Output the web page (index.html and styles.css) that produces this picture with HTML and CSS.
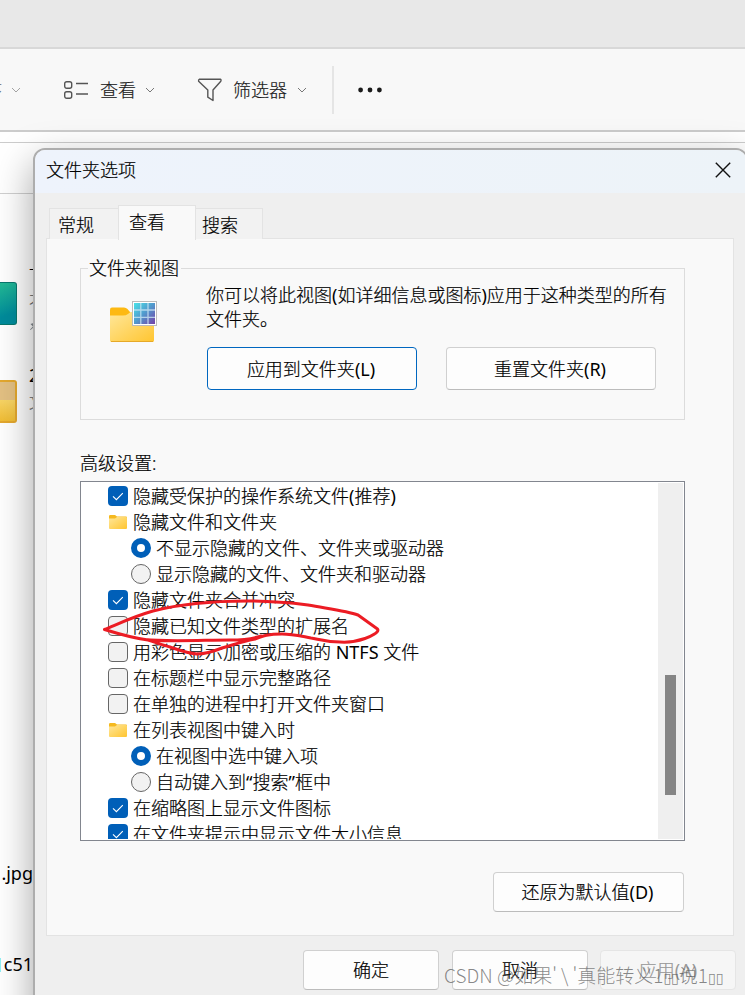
FILE: index.html
```html
<!DOCTYPE html>
<html lang="zh-CN">
<head>
<meta charset="utf-8">
<title>文件夹选项</title>
<link rel="stylesheet" href="styles.css">
</head>
<body>
<svg class="defs" width="0" height="0">
  <defs>
    <linearGradient id="fold" x1="0" y1="0" x2="1" y2="1"><stop offset="0" stop-color="#ffe79a"/><stop offset="1" stop-color="#ffc530"/></linearGradient>
    <linearGradient id="grid" x1="0" y1="0" x2="1" y2="1"><stop offset="0" stop-color="#48e2e8"/><stop offset=".5" stop-color="#5298cc"/><stop offset="1" stop-color="#7440a8"/></linearGradient>
    <symbol id="chev" viewBox="0 0 10 6"><path d="M1 1l4 4 4-4" fill="none" stroke="#777" stroke-width="1"/></symbol>
    <symbol id="folder" viewBox="0 0 18 14"><path d="M0 1.200Q0 0 1.200 0H6l2 1.500h9q1 0 1 1v3H0z" fill="#f5b91f"/><path d="M0 3.500h6l2-1.500h9q1 0 1 1V13q0 1-1 1H1q-1 0-1-1z" fill="url(#fold)"/></symbol>
    <symbol id="tick" viewBox="0 0 20 20"><path d="M5 10.300l3.400 3.400 6.400-6.600" fill="none" stroke="#fff" stroke-width="1.100"/></symbol>
  </defs>
</svg>
<div class="explorer">
  <div class="topbar"></div>
  <div class="toolbar">
    <span class="tool sort"><span class="sort-label">序</span><svg class="chev"><use href="#chev"/></svg></span>
    <span class="tool view">
      <svg width="26" height="20" viewBox="0 0 26 20" fill="none" stroke="#555" stroke-width="1.400"><rect x="1.700" y="1.700" width="7" height="6.600" rx="2"/><rect x="1.700" y="11.700" width="7" height="6.600" rx="2"/><path d="M13 3.500h12M13 14h12"/></svg>
      <span>查看</span><svg class="chev"><use href="#chev"/></svg>
    </span>
    <span class="tool filter">
      <svg width="26" height="24" viewBox="0 0 26 24" fill="none" stroke="#555" stroke-width="1.400" stroke-linejoin="round"><path d="M2.500 1.200h20.800q1.200.6.500 2L16 12v10.500l-5.200-3.300V12L1.600 3.200q-.4-1.400.9-2z"/></svg>
      <span>筛选器</span><svg class="chev"><use href="#chev"/></svg>
    </span>
    <span class="divider"></span>
    <svg class="more" width="24" height="6" viewBox="0 0 24 6"><circle cx="2.600" cy="3" r="2.400"/><circle cx="12" cy="3" r="2.400"/><circle cx="21.400" cy="3" r="2.400"/></svg>
  </div>
  <div class="address"></div>
  <div class="header-gap"></div>
  <div class="files">
    <div class="file first">
      <div class="thumb teal"></div>
      <div class="meta"><span>一</span><span class="sub">不</span><svg class="pin" width="14" height="14" viewBox="0 0 14 14"><path d="M8 1l5 5-2 1-3 3-1 3-2.500-2.500L1.500 13 1 12.500l3-3L1.500 7l3-1 3-3z" fill="#858b90"/></svg></div>
    </div>
    <div class="file second">
      <div class="thumb gold"></div>
      <div class="meta"><span class="lat">2</span><span class="sub">文</span></div>
    </div>
    <div class="name jpg lat">.jpg</div>
    <div class="name hash lat"><i class="mark"></i>c51</div>
  </div>
</div>

<div class="dialog">
  <div class="titlebar"><span>文件夹选项</span><svg width="16" height="16" viewBox="0 0 16 16"><path d="M.8.8l14.400 14.400M15.200.8L.8 15.200" stroke="#111" stroke-width="1.400"/></svg></div>
  <div class="tabs"><div class="tab general">常规</div><div class="tab active">查看</div><div class="tab search">搜索</div></div>
  <div class="panel">
    <div class="group">
      <div class="legend"><span>文件夹视图</span></div>
      <div class="group-body">
        <svg class="bigfolder" width="48" height="42" viewBox="0 0 48 42">
          <path d="M0 8.500Q0 6.500 2 6.500H14q2 0 3.500 1.500L20 11v7H0z" fill="#fdb913"/>
          <path d="M0 14.500h13q3 0 5-1.500l2.500-2H42q2 0 2 2v26.500q0 1.500-2 1.500H2q-2 0-2-1.500z" fill="url(#fold)"/><path d="M1 40.500h42" stroke="#e6a928"/>
          <rect x="22.500" y=".5" width="24" height="24" fill="#fff" stroke="#bbb"/>
          <rect x="24" y="2" width="21" height="21" fill="url(#grid)"/>
          <path d="M30.800 2v21M38 2v21M24 9h21M24 16.300h21" stroke="#c9e5f2" stroke-opacity=".8" stroke-width="1.300"/>
        </svg>
        <div class="group-main">
          <p>你可以将此视图<span class="lat">(</span>如详细信息或图标<span class="lat">)</span>应用于这种类型的所有<br>文件夹。</p>
          <div class="pair"><div class="btn primary">应用到文件夹<span class="lat">(L)</span></div><div class="btn">重置文件夹<span class="lat">(R)</span></div></div>
        </div>
      </div>
    </div>
    <div class="adv">高级设置:</div>
    <div class="listbox">
      <div class="rows">
        <div class="row"><svg class="check on"><use href="#tick"/></svg><span>隐藏受保护的操作系统文件<span class="lat">(</span>推荐<span class="lat">)</span></span></div>
        <div class="row"><svg class="fold"><use href="#folder"/></svg><span>隐藏文件和文件夹</span></div>
        <div class="row child"><i class="radio on"></i><span>不显示隐藏的文件、文件夹或驱动器</span></div>
        <div class="row child"><i class="radio"></i><span>显示隐藏的文件、文件夹和驱动器</span></div>
        <div class="row"><svg class="check on"><use href="#tick"/></svg><span>隐藏文件夹合并冲突</span></div>
        <div class="row"><i class="check"></i><span>隐藏已知文件类型的扩展名</span></div>
        <div class="row"><i class="check"></i><span>用彩色显示加密或压缩的<span class="lat"> NTFS </span>文件</span></div>
        <div class="row"><i class="check"></i><span>在标题栏中显示完整路径</span></div>
        <div class="row"><i class="check"></i><span>在单独的进程中打开文件夹窗口</span></div>
        <div class="row"><svg class="fold"><use href="#folder"/></svg><span>在列表视图中键入时</span></div>
        <div class="row child"><i class="radio on"></i><span>在视图中选中键入项</span></div>
        <div class="row child"><i class="radio"></i><span>自动键入到<span class="lat">“</span>搜索<span class="lat">”</span>框中</span></div>
        <div class="row"><svg class="check on"><use href="#tick"/></svg><span>在缩略图上显示文件图标</span></div>
        <div class="row"><svg class="check on"><use href="#tick"/></svg><span>在文件夹提示中显示文件大小信息</span></div>
      </div>
      <div class="scroll"><div class="thumbbar"></div></div>
    </div>
    <div class="btn restore">还原为默认值<span class="lat">(D)</span></div>
  </div>
  <div class="footer"><div class="btn">确定</div><div class="btn">取消</div><div class="btn disabled">应用<span class="lat">(A)</span></div></div>
</div>

<svg class="ink" width="290" height="64" viewBox="97 595 290 64"><path d="M104.500 629.500C118 624 132 617 153 611C180 604 215 601 248 601C275 601 292 603 308 605C330 609 347 611 358 615L377.500 629C380 632 370 637 365 638.500C355 642 347 642.500 340 642C325 642 318 639 311 638C300 636 292 634 282 634C268 634 263 636 255 639C240 642 233 645 222 648C212 652 205 654 197 654C186 653 179 650 170 647C161 645 155 642 148 640C132 638 119 634 104.500 629.500M145 639.500C165 642 205 640 230 640Q249 640 261 636"/></svg>
<div class="watermark">CSDN @如果'<span class="slash">\</span>'真能转义1<span class="box">▯▯</span>说1<span class="box">▯▯</span></div>
</body>
</html>
```
FILE: styles.css
```css
* { box-sizing: border-box; }
html, body { margin: 0; height: 995px; overflow: hidden; }
body {
  position: relative;
  background: #fff;
  color: #000;
  font: 300 18px/24px "Noto Sans", "Noto Sans CJK SC", sans-serif;
  -webkit-text-stroke: .2px;
  white-space: nowrap;
}
svg { display: block; flex: none; }
.defs { position: absolute; }
.lat { font-weight: 400; -webkit-text-stroke: 0; white-space: pre; }

.explorer { height: 995px; overflow: hidden; }
.topbar { height: 49px; background: #e8e8e8; border-bottom: 2px solid #d8d8d8; }
.toolbar {
  height: 83px;
  display: flex;
  align-items: center;
  padding-top: 1px;
  background: #f8f8f8;
  border-bottom: 2px solid #ccc;
}
.tool { display: flex; align-items: center; color: #1b1b1b; }
.chev { width: 10px; height: 6px; }
.sort { width: 63px; gap: 9px; opacity: .65; }
.sort-label { width: 2px; display: flex; justify-content: flex-end; overflow: hidden; }
.view { width: 134px; gap: 10px; }
.view span { margin-left: 1px; margin-right: -1px; }
.filter { width: 135px; gap: 10px; }
.divider { width: 2px; height: 48px; background: #e5e5e5; }
.more { margin-left: 24px; fill: #1b1b1b; }
.address { height: 11px; border-bottom: 1px solid #ccc; }
.header-gap { height: 51px; border-bottom: 1px solid #d0d0d0; }
.files { padding-top: 64px; }
.file { display: flex; gap: 12px; }
.first { height: 105px; }
.second { height: 498px; }
.thumb { width: 17px; height: 43px; margin-top: 24px; border-radius: 0 3px 3px 0; }
.second .thumb { margin-top: 17px; }
.teal { background: linear-gradient(160deg, #23ba94, #008b9b 75%); border: solid #08776e; border-width: 1px 1px 1px 0; }
.gold { background: linear-gradient(#e3c083 0 45%, #f8d566 46%, #f0bd35); border: 2px solid #e4a82e; border-left: 0; }
.meta { display: flex; flex-direction: column; }
.first .meta { gap: 8px; }
.meta span { height: 24px; }
.first .meta .pin { margin-top: -5px; }
.sub { color: #666; font-size: 16px; }
.second .sub { margin-top: 3px; }
.name { height: 91px; width: 33px; display: flex; justify-content: flex-end; }
.hash { justify-content: space-between; padding-right: 0; }
.mark { width: 1px; height: 14px; margin-top: 6px; background: #8ff0f5; }

.dialog {
  position: absolute;
  left: 33px;
  top: 148px;
  width: 715px;
  height: 880px;
  overflow: hidden;
  background: #efefef;
  background-clip: padding-box;
  border: 2px solid #adadad;
  border-radius: 12px;
  box-shadow: 0 14px 38px rgba(0, 0, 0, .36);
}
.titlebar {
  height: 43px;
  display: flex;
  justify-content: space-between;
  align-items: center;
  padding: 0 15px 3px 11px;
  background: linear-gradient(90deg, #eef3fc, #edf3f8);
}
.tabs { height: 46px; display: flex; align-items: flex-end; padding-left: 14px; }
.tab { height: 31px; padding: 4px 0 0 8px; background: #f2f2f2; border: 1px solid #e3e3e3; border-bottom: 0; }
.general { width: 70px; border-right: 0; }
.active { width: 78px; height: 35px; padding-left: 10px; background: #f9f9f9; z-index: 1; margin-left: -1px; margin-bottom: -1px; }
.search { width: 67px; border-left: 0; padding-left: 6px; }
.panel {
  margin-left: 11px;
  width: 688px;
  height: 698px;
  padding: 18px 0 0 33px;
  margin-top: -1px;
  background: #f9f9f9;
  border: 1px solid #e3e3e3;
}
.group { width: 605px; height: 163px; display: flex; flex-direction: column; }
.legend { height: 23px; display: flex; }
.legend::before, .legend::after { content: ""; height: 12px; margin-top: 11px; border-top: 1px solid #dcdcdc; }
.legend::before { width: 7px; border-left: 1px solid #dcdcdc; }
.legend::after { flex: 1; border-right: 1px solid #dcdcdc; }
.legend span { padding: 0 2px 0 1px; margin-top: -1px; }
.group-body { flex: 1; display: flex; gap: 48px; padding: 3px 0 0 29px; border: 1px solid #dcdcdc; border-top: 0; }
.bigfolder { margin-top: 18px; }
p { margin: 0; line-height: 24px; }
.pair { display: flex; gap: 29px; margin: 16px 0 0 1px; }
.btn {
  width: 210px;
  height: 43px;
  display: flex;
  align-items: center;
  justify-content: center;
  padding-right: 2px;
  background: #fdfdfd;
  border: 1px solid #d0d0d0;
  border-bottom-color: #bcbcbc;
  border-radius: 4px;
}
.primary { border-color: #0067c0; }
.adv { margin-top: 31px; height: 30px; }
.listbox { width: 605px; height: 360px; padding: 1px; display: flex; background: #fff; border: 1px solid #82868f; }
.rows { flex: 1; height: 356px; overflow: hidden; padding-left: 26px; }
.row { height: 26px; display: flex; align-items: center; gap: 5px; }
.child { padding-left: 23px; }
.check, .radio { flex: none; width: 20px; height: 20px; border: 1px solid #666; border-radius: 4px; background: #f2f2f2; }
.check.on { border: 0; background: #005fb8; }
.radio { border-radius: 50%; }
.radio.on { border: 6px solid #005fb8; background: #fff; }
.fold { width: 18px; height: 14px; margin: 0 1px; }
.scroll { width: 25px; background: #efefef; padding: 192px 7px 0; }
.thumbbar { height: 120px; background: #858585; }
.restore { width: 191px; height: 40px; margin: 31px 0 0 413px; }
.footer { display: flex; gap: 13px; padding: 14px 0 0 268px; }
.footer .btn { width: 136px; height: 40px; padding: 0; }
.footer .disabled { color: #999; background: #f6f6f6; border-color: #e5e5e5; margin-left: -1px; }

.ink { position: absolute; left: 97px; top: 595px; fill: none; stroke: #ec1c24; stroke-width: 3; stroke-linecap: round; stroke-linejoin: round; }
.watermark {
  position: absolute;
  left: 444px;
  top: 963px;
  color: rgba(85, 85, 85, .7);
  font: 300 19px/24px "Noto Sans CJK SC", sans-serif;
  -webkit-text-stroke: 0;
}
.slash { margin: 0 4px; }
.box { font: 14px/24px "DejaVu Sans", sans-serif; }
```
